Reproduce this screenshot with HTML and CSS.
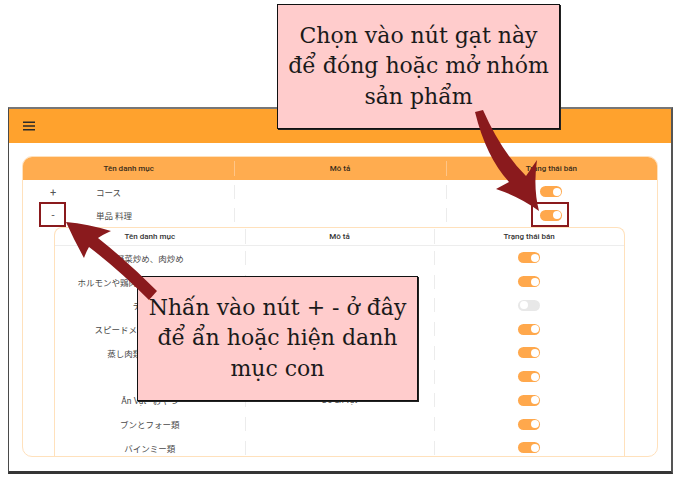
FILE: index.html
```html
<!DOCTYPE html>
<html lang="vi">
<head>
<meta charset="utf-8">
<title>Danh mục</title>
<link rel="stylesheet" href="styles.css">
</head>
<body>
<div class="figure">
  <div class="window">
    <header class="appbar">
      <svg class="menu" width="12" height="10" viewBox="0 0 12 10"><rect x="0" y="0.5" width="12" height="1.5" fill="#2a2a2a"/><rect x="0" y="4.25" width="12" height="1.5" fill="#2a2a2a"/><rect x="0" y="8" width="12" height="1.5" fill="#2a2a2a"/></svg>
    </header>
    <main class="content">
      <section class="card">
        <div class="thead grid3">
          <div class="th">Tên danh mục</div>
          <div class="th">Mô tả</div>
          <div class="th">Trạng thái bán</div>
        </div>
        <div class="row grid3">
          <div class="td name"><span class="expander">+</span><span class="label">コース</span></div>
          <div class="td"></div>
          <div class="td c"><span class="switch on"></span></div>
        </div>
        <div class="row grid3">
          <div class="td name"><span class="expander">-</span><span class="label">単品 料理</span></div>
          <div class="td"></div>
          <div class="td c"><span class="switch on"></span></div>
        </div>
        <div class="subwrap">
          <div class="subtable">
            <div class="sub-head grid3">
              <div class="sth">Tên danh mục</div>
              <div class="sth">Mô tả</div>
              <div class="sth">Trạng thái bán</div>
            </div>
            <div class="sub-row grid3"><div class="std c">野菜炒め、肉炒め</div><div class="std c"></div><div class="std c"><span class="switch on"></span></div></div>
            <div class="sub-row grid3"><div class="std c">ホルモンや鶏肉のグリル・焼き物料理</div><div class="std c"></div><div class="std c"><span class="switch on"></span></div></div>
            <div class="sub-row grid3"><div class="std c">デザート</div><div class="std c"></div><div class="std c"><span class="switch"></span></div></div>
            <div class="sub-row grid3"><div class="std c">スピードメニュー・おつまみ</div><div class="std c"></div><div class="std c"><span class="switch on"></span></div></div>
            <div class="sub-row grid3"><div class="std c">蒸し肉類・蒸し魚料理</div><div class="std c"></div><div class="std c"><span class="switch on"></span></div></div>
            <div class="sub-row grid3"><div class="std c">麺類</div><div class="std c"></div><div class="std c"><span class="switch on"></span></div></div>
            <div class="sub-row grid3"><div class="std c">Ăn Vặt - おやつ</div><div class="std c">Đồ ăn vặt</div><div class="std c"><span class="switch on"></span></div></div>
            <div class="sub-row grid3"><div class="std c">ブンとフォー類</div><div class="std c"></div><div class="std c"><span class="switch on"></span></div></div>
            <div class="sub-row grid3"><div class="std c">バインミー類</div><div class="std c"></div><div class="std c"><span class="switch on"></span></div></div>
          </div>
        </div>
      </section>
    </main>
  </div>

  <div class="mark mark-minus"></div>
  <div class="mark mark-switch"></div>

  <div class="callout callout-top">Chọn vào nút gạt này<br>để đóng hoặc mở nhóm<br>sản phẩm</div>
  <div class="callout callout-left">Nhấn vào nút + - ở đây<br>để ẩn hoặc hiện danh<br>mục con</div>

  <svg class="arrows" width="677" height="478" viewBox="0 0 677 478">
    <path d="M475 112 Q486 157 509 182 L496 189 Q520 197 539 211 Q533 188 537 160 L526 176 Q501 151 483 110 Z" fill="#8A1A1D"/>
    <path d="M66 222 Q88 224 111 231 Q102 235 98 238 Q127 261 157 291 L149 300 Q118 269 89 247 Q86 252 84 258 Q74 240 66 222 Z" fill="#8A1A1D"/>
  </svg>
</div>
</body>
</html>
```

FILE: styles.css
```css
html, body {
  margin: 0;
  padding: 0;
  background: #ffffff;
}

body {
  font-family: Roboto, "Noto Sans CJK JP", sans-serif;
  color: #444;
}

.figure {
  position: relative;
  width: 677px;
  height: 478px;
  padding: 107px 0 0 8px;
  box-sizing: border-box;
  overflow: hidden;
}

.window {
  width: 665px;
  height: 367px;
  box-sizing: border-box;
  border-top: 2px solid #777777;
  border-left: 1px solid #4a4a4a;
  border-right: 2px solid #555555;
  border-bottom: 3px solid #353535;
  background: #ffffff;
  display: flex;
  flex-direction: column;
}

.appbar {
  flex: none;
  height: 34px;
  background: #FFA22D;
  display: flex;
  align-items: center;
  padding-left: 14px;
}

.menu {
  display: block;
}

.content {
  flex: 1;
  min-height: 0;
  display: flex;
  padding: 13px 13px 14px;
}

.card {
  flex: 1;
  display: flex;
  flex-direction: column;
  border: 1px solid #FFE1BC;
  border-radius: 10px;
  overflow: hidden;
}

.grid3 {
  display: grid;
  grid-template-columns: 1fr 1fr 1fr;
}

.thead {
  flex: none;
  height: 23px;
  background: #FFAC4F;
}

.th {
  line-height: 23px;
  text-align: center;
  font-size: 8px;
  font-weight: 500;
  color: #3a2c1a;
}

.th + .th {
  background: linear-gradient(#FFC587, #FFC587) left center / 1px 15px no-repeat;
}

.row {
  flex: none;
  height: 23.5px;
}

.td {
  display: flex;
  align-items: center;
  font-size: 8.5px;
  color: #4a4a4a;
}

.td + .td {
  background: linear-gradient(#ececec, #ececec) left center / 1px 14px no-repeat;
}

.c {
  justify-content: center;
}

.expander {
  width: 20px;
  margin-left: 20px;
  padding-top: 1px;
  text-align: center;
  font-size: 11px;
  color: #555;
  font-family: Roboto, sans-serif;
}

.label {
  margin-left: 33px;
}

.subwrap {
  flex: 1;
  min-height: 0;
  padding: 0 32px 0 31px;
}

.subtable {
  border: 1px solid #FFE1BC;
  border-bottom: none;
  border-radius: 8px 8px 0 0;
}

.sub-head {
  height: 17px;
  border-bottom: 1px solid #ededed;
}

.sth {
  line-height: 17px;
  text-align: center;
  font-size: 8px;
  font-weight: 500;
  color: #333;
}

.sth + .sth {
  background: linear-gradient(#ececec, #ececec) left center / 1px 15px no-repeat;
}

.sub-row {
  height: 23.75px;
}

.std {
  display: flex;
  align-items: center;
  font-size: 8.5px;
  color: #4a4a4a;
  white-space: nowrap;
  overflow: hidden;
}

.std + .std {
  background: linear-gradient(#ececec, #ececec) left center / 1px 14px no-repeat;
}

.switch {
  display: flex;
  align-items: center;
  justify-content: flex-start;
  width: 22px;
  height: 11px;
  box-sizing: border-box;
  padding: 0 1.5px;
  border-radius: 6px;
  background: #E8E8E8;
}

.switch::after {
  content: "";
  width: 8px;
  height: 8px;
  border-radius: 50%;
  background: #ffffff;
}

.switch.on {
  background: #FFA84C;
  justify-content: flex-end;
}

.mark {
  position: absolute;
  border: 2.5px solid #8A1A1D;
  box-sizing: border-box;
}

.mark-minus {
  left: 39px;
  top: 202px;
  width: 27px;
  height: 25px;
}

.mark-switch {
  left: 531px;
  top: 202px;
  width: 38px;
  height: 25px;
}

.callout {
  position: absolute;
  box-sizing: border-box;
  display: flex;
  align-items: center;
  justify-content: center;
  text-align: center;
  white-space: nowrap;
  background: #FFCCCC;
  border: 1.5px solid #111;
  box-shadow: 1px 1px 0 #222;
  font-family: "DejaVu Serif", serif;
  font-size: 22px;
  line-height: 30.5px;
  color: #1a1a1a;
}

.callout-top {
  left: 277px;
  top: 4px;
  width: 283px;
  height: 125px;
}

.callout-left {
  left: 137px;
  top: 276px;
  width: 281px;
  height: 125px;
}

.arrows {
  position: absolute;
  left: 0;
  top: 0;
  pointer-events: none;
}
```
